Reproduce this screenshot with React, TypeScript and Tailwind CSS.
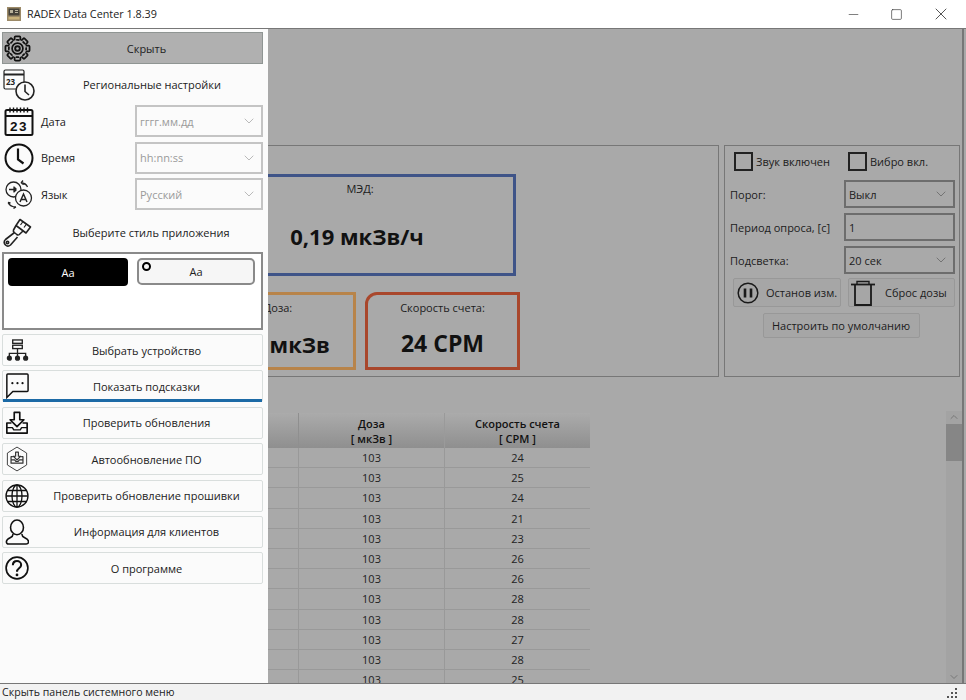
import { ChevronDown, Minus, Square, X } from "lucide-react";
import type { ReactNode } from "react";

const rows = ["24", "25", "24", "21", "23", "26", "26", "28", "28", "27", "28", "25"];

function GearIcon() {
  const teeth = [0, 45, 90, 135, 180, 225, 270, 315];
  return (
    <svg width="27" height="27" viewBox="0 0 28 28" fill="none" stroke="#111" strokeWidth="1.8">
      {teeth.map((a) => (
        <rect key={a} x="11" y="1.5" width="6" height="5" rx="1" transform={`rotate(${a} 14 14)`} fill="#b0b0b0" />
      ))}
      <circle cx="14" cy="14" r="9" fill="#b0b0b0" stroke="none" />
      <circle cx="14" cy="14" r="9" strokeDasharray="3.5 3.570" strokeDashoffset="1.700" />
      <circle cx="14" cy="14" r="5.6" />
      <circle cx="14" cy="14" r="2.4" strokeWidth="2" />
    </svg>
  );
}

function CalendarClockIcon() {
  return (
    <svg width="32" height="32" viewBox="0 0 32 32" fill="none" stroke="#222" strokeWidth="1.2">
      <rect x="1" y="1" width="20" height="19" rx="1.5" />
      <path d="M1 5.5h20" strokeWidth="2" />
      <text x="3" y="15.5" fontSize="8" fontWeight="700" fill="#222" stroke="none" fontFamily="Open Sans, sans-serif">23</text>
      <circle cx="22" cy="22" r="9" fill="#fbfbfb" strokeWidth="1.6" />
      <path d="M22 15.5V22.5L26 26" strokeWidth="1.6" />
    </svg>
  );
}

function DateIcon() {
  return (
    <svg width="30" height="30" viewBox="0 0 30 30" fill="none" stroke="#111">
      <rect x="1.5" y="4" width="27" height="25" rx="1.5" strokeWidth="2" />
      <path d="M1.5 10h27" strokeWidth="2" />
      <path d="M6 1.5v5M9.5 1.5v5M13 1.5v5M16.5 1.5v5M20 1.5v5M23.5 1.5v5" strokeWidth="1.4" />
      <text x="15" y="25" textAnchor="middle" fontSize="13.5" fontWeight="700" letterSpacing="1.5" fill="#111" stroke="none" fontFamily="Liberation Sans, sans-serif">23</text>
    </svg>
  );
}

function ClockIcon() {
  return (
    <svg width="30" height="30" viewBox="0 0 30 30" fill="none" stroke="#111" strokeWidth="2">
      <circle cx="15" cy="15" r="13.5" />
      <path d="M14 5.5V16.5L19.5 20.5" strokeWidth="2.2" />
    </svg>
  );
}

function LanguageIcon() {
  return (
    <svg width="32" height="32" viewBox="0 0 32 32" fill="none" stroke="#222" strokeWidth="1.3">
      <circle cx="10.5" cy="11.5" r="7.5" />
      <circle cx="20.5" cy="20" r="8" fill="#fbfbfb" />
      <path d="M6 11.5h7M11 8.5v6M13.5 11.5l-2-2M13.5 11.5l-2 2" />
      <path d="M17 24l3.5-8 3.5 8M18.2 21.5h4.6" strokeWidth="1.5" />
      <path d="M18 5c3 0 5.5 1.5 6.5 4M18 5l2-2.5M18 5l2.5 1.5" />
      <path d="M13 29c-4 0-6.500-1.500-8-4.500M13 29l-2.500 1.500M5 24.500l2.500 .500" />
    </svg>
  );
}

function BrushIcon() {
  return (
    <svg width="32" height="32" viewBox="0 0 32 32" fill="none" stroke="#222" strokeWidth="1.6" strokeLinejoin="round">
      <path d="M18 3.500L28.500 11 24 17 14 9.500z" />
      <path d="M21 5.500l-2.500 3.500M24.500 8l-2.500 3.500" strokeWidth="1.2" />
      <path d="M14 9.500L11.500 14c-.5 1 0 1.800.8 2.500l2.500 2c.8.600 1.700.700 2.500 0L21 15" />
      <path d="M12.500 16.500L3.500 23.500c-2 1.800-1.500 4 0 5.500s3.500 1.300 5 0l7-8" />
      <circle cx="5.500" cy="26.500" r="1.200" />
    </svg>
  );
}

function NetworkIcon() {
  return (
    <svg width="23" height="23" viewBox="0 0 24 24" fill="none" stroke="#222" strokeWidth="1.4">
      <rect x="7" y="1" width="10" height="3.500" />
      <rect x="7" y="6.500" width="10" height="3.500" />
      <path d="M12 10v5M3.500 18v-3h17v3M12 15v3" />
      <circle cx="3.500" cy="20" r="2" fill="#222" />
      <circle cx="12" cy="20" r="2" fill="#222" />
      <circle cx="20.500" cy="20" r="2" fill="#222" />
    </svg>
  );
}

function ChatIcon() {
  return (
    <svg width="24" height="28" viewBox="0 0 26 28" fill="none" stroke="#111" strokeWidth="1.6">
      <path d="M3 1h21c.6 0 1 .4 1 1v17c0 .6-.4 1-1 1H8.500L2 26.500V2c0-.6.4-1 1-1z" />
      <circle cx="8" cy="11" r="1.200" fill="#111" stroke="none" />
      <circle cx="13.500" cy="11" r="1.200" fill="#111" stroke="none" />
      <circle cx="19" cy="11" r="1.200" fill="#111" stroke="none" />
    </svg>
  );
}

function InboxIcon() {
  return (
    <svg width="24" height="24" viewBox="0 0 26 26" fill="none" stroke="#111" strokeWidth="1.8" strokeLinejoin="round">
      <path d="M10 1.500h6v8h4.500L13 17 5.500 9.500H10z" />
      <path d="M7 13H2v11h22V13h-5" />
      <path d="M2 18h6l1.500 2.500h7L18 18h6" strokeWidth="1.5" />
    </svg>
  );
}

function HexIcon() {
  return (
    <svg width="22" height="26" viewBox="0 0 24 28" fill="none" stroke="#333" strokeWidth="1">
      <path d="M12 1l10.500 6.500v13L12 27 1.500 20.500v-13z" />
      <g strokeWidth="1.300" strokeLinejoin="round">
        <path d="M10.500 6.500h3v4.500h2.500L12 15l-4-4h2.500z" />
        <path d="M7.500 11.500H5.500v7h13v-7h-2" />
        <path d="M5.500 15h4l1 1.500h3l1-1.500h4" />
      </g>
    </svg>
  );
}

function GlobeIcon() {
  return (
    <svg width="24" height="24" viewBox="0 0 24 24" fill="none" stroke="#111" strokeWidth="1.300">
      <circle cx="12" cy="12" r="11" />
      <ellipse cx="12" cy="12" rx="5" ry="11" />
      <path d="M12 1v22M1 12h22M2.500 6.500h19M2.500 17.500h19" />
    </svg>
  );
}

function UserIcon() {
  return (
    <svg width="24" height="26" viewBox="0 0 26 28" fill="none" stroke="#111" strokeWidth="1.7">
      <ellipse cx="13" cy="9" rx="7" ry="8" />
      <path d="M8.500 16c.500 2-.500 3-2.500 4-2.500 1.200-4.500 2-4.500 4.500 0 1.500 1 2.500 2.500 2.500h19c1.500 0 2.500-1 2.500-2.500 0-2.500-2-3.300-4.500-4.500-2-1-3-2-2.500-4" />
    </svg>
  );
}

function HelpIcon() {
  return (
    <svg width="24" height="24" viewBox="0 0 26 26" fill="none" stroke="#111" strokeWidth="1.8">
      <circle cx="13" cy="13" r="11.800" />
      <path d="M8.500 10c0-2.800 2-4.500 4.500-4.500s4.500 1.700 4.500 4.200c0 3.800-4.500 3.500-4.500 7.300" strokeWidth="2.200" />
      <circle cx="13" cy="20.500" r="1.500" fill="#111" stroke="none" />
    </svg>
  );
}

function PauseIcon() {
  return (
    <svg width="22" height="22" viewBox="0 0 22 22" fill="none" stroke="#1a1a1a" strokeWidth="1.500">
      <circle cx="11" cy="11" r="9.800" />
      <path d="M8 6.500v9M14 6.500v9" strokeWidth="2.600" />
    </svg>
  );
}

function TrashIcon() {
  return (
    <svg width="24" height="26" viewBox="0 0 24 26" fill="none" stroke="#1a1a1a" strokeWidth="1.800">
      <path d="M0 4.500h24" />
      <path d="M6 4.500V1.500h12v3" strokeWidth="1.400" />
      <path d="M4 5v20h16V5" />
    </svg>
  );
}

function AppLogo() {
  return (
    <svg width="14" height="14" viewBox="0 0 14 14">
      <rect width="14" height="14" fill="#9c8a68" />
      <rect x="1.500" y="1.500" width="11" height="7" fill="#45423a" />
      <path d="M3 3h3v3H3zM8 3h3v1H8zM8 5h3v1H8z" fill="#b9b29c" />
      <rect x="1.500" y="10" width="11" height="2.500" fill="#c9b27a" />
    </svg>
  );
}

function SideButton({ icon, label, active }: { icon: ReactNode; label: string; active?: boolean }) {
  return (
    <div className="relative flex h-[32px] items-center rounded-[2px] border border-[#d9dedd] bg-[#fbfbfb]">
      <span className="flex w-[28px] shrink-0 items-center justify-center">{icon}</span>
      <span className="flex-1 text-center text-[#222]">{label}</span>
      {active && <div className="absolute inset-x-0 -bottom-px h-[3px] bg-[#1c6aa6]" />}
    </div>
  );
}

function SideCombo({ icon, label, value }: { icon: ReactNode; label: string; value: string }) {
  return (
    <div className="flex h-[32px] items-center">
      <span className="flex w-[34px] shrink-0 justify-center">{icon}</span>
      <span className="ml-[5px] w-[94px] text-[#222]">{label}</span>
      <div className="flex h-[32px] flex-1 items-center justify-between border-2 border-[#c4c4c4] pl-[3px] pr-[4px] text-[#9a9a9a]">
        {value}
        <ChevronDown size={16} strokeWidth={1} className="text-[#999]" />
      </div>
    </div>
  );
}

function PanelCombo({ value }: { value: string }) {
  return (
    <div className="flex h-[28px] w-[111px] items-center justify-between border-2 border-[#6d6d6d] pl-[3px] pr-[4px]">
      {value}
      <ChevronDown size={16} strokeWidth={1.2} className="text-[#666]" />
    </div>
  );
}

function Checkbox({ label }: { label: string }) {
  return (
    <div className="flex items-center gap-[3px] whitespace-nowrap">
      <div className="size-[19px] border-2 border-[#222]" />
      {label}
    </div>
  );
}

function Drawer() {
  return (
    <div className="absolute inset-y-0 left-0 flex w-[268px] flex-col bg-[#fbfbfb] pl-[2px] pr-[5px] pt-[3px]">
      <div className="flex h-[32px] items-center border border-[#8f9593] bg-[#b0b0b0]">
        <span className="flex w-[28px] shrink-0 justify-center"><GearIcon /></span>
        <span className="flex-1 text-center text-[#222]">Скрыть</span>
      </div>
      <div className="mt-[3px] flex h-[35px] items-center">
        <span className="flex w-[34px] shrink-0 justify-center"><CalendarClockIcon /></span>
        <span className="flex-1 pl-[5px] text-center text-[#222]">Региональные настройки</span>
      </div>
      <div className="mt-[3px] flex flex-col gap-[4.5px]">
        <SideCombo icon={<DateIcon />} label="Дата" value="гггг.мм.дд" />
        <SideCombo icon={<ClockIcon />} label="Время" value="hh:nn:ss" />
        <SideCombo icon={<LanguageIcon />} label="Язык" value="Русский" />
      </div>
      <div className="mt-[4px] flex h-[36px] items-center">
        <span className="flex w-[32px] shrink-0 justify-center"><BrushIcon /></span>
        <span className="flex-1 pl-[5px] text-center text-[#222]">Выберите стиль приложения</span>
      </div>
      <div className="mt-[2px] flex h-[78px] items-start gap-[9px] border-2 border-[#8a8a8a] bg-white pl-[4px] pt-[4px]">
        <div className="flex h-[28px] w-[120px] items-center justify-center rounded-[4px] bg-black text-white">Aa</div>
        <div className="relative flex h-[27px] w-[118px] items-center justify-center rounded-[5px] border-2 border-[#8a8a8a] bg-[#f6f6f6] text-[#222]">
          Aa
          <div className="absolute left-[3px] top-[2px] size-[9px] rounded-full border-2 border-black" />
        </div>
      </div>
      <div className="mt-[4px] flex flex-col gap-[4.400px]">
        <SideButton icon={<NetworkIcon />} label="Выбрать устройство" />
        <SideButton icon={<ChatIcon />} label="Показать подсказки" active />
        <SideButton icon={<InboxIcon />} label="Проверить обновления" />
        <SideButton icon={<HexIcon />} label="Автообновление ПО" />
        <SideButton icon={<GlobeIcon />} label="Проверить обновление прошивки" />
        <SideButton icon={<UserIcon />} label="Информация для клиентов" />
        <SideButton icon={<HelpIcon />} label="О программе" />
      </div>
    </div>
  );
}

export default function App() {
  return (
    <div className="flex h-[700px] w-[966px] flex-col overflow-hidden bg-white text-[11px] leading-none text-[#1c1c1c] [font-family:'Open_Sans','Noto_Sans',sans-serif]">
      <div className="flex h-[28px] shrink-0 items-center bg-white pl-[7px]">
        <AppLogo />
        <span className="ml-[6px] text-[10.800px] text-[#222]">RADEX Data Center 1.8.39</span>
        <div className="ml-auto flex items-center text-[#333]">
          <Minus size={15} strokeWidth={1} className="mr-[29px]" />
          <Square size={13} strokeWidth={1.200} className="mr-[28px]" />
          <X size={20} strokeWidth={1} className="mr-[15px]" />
        </div>
      </div>

      <div className="relative flex min-h-0 flex-1 flex-col border-y border-[#777] bg-[#a9a9a9]">
        <div className="mr-[2px] flex min-h-0 flex-1 flex-col border-r-2 border-[#777]">
          <div className="mt-[116px] flex h-[232px] shrink-0 gap-[5px] pl-[6px] pr-[2px]">
            <div className="flex flex-1 flex-col items-center border border-[#777] pr-[5px] pt-[28px]">
              <div className="flex h-[102px] w-[312px] flex-col items-center border-[3px] border-[#3f5488] pt-[6px]">
                МЭД:
                <div className="mt-[31px] pr-[6px] text-[22px] font-bold text-[#111]">0,19 мкЗв/ч</div>
              </div>
              <div className="mt-[16px] flex gap-[9px]">
                <div className="flex h-[78px] w-[156px] flex-col items-center border-[3px] border-[#b8844a] pt-[7px]">
                  Доза:
                  <div className="mt-[20px] text-[22px] font-bold text-[#111]">103 мкЗв</div>
                </div>
                <div className="flex h-[78px] w-[155px] flex-col items-center rounded-tl-[12px] border-[3px] border-[#a9472c] pt-[7px]">
                  Скорость счета:
                  <div className="mt-[19px] text-[23px] font-bold text-[#111]">24 CPM</div>
                </div>
              </div>
            </div>

            <div className="flex w-[236px] shrink-0 flex-col border border-[#777] pl-[5px] pr-[4px] pt-[6px]">
              <div className="flex items-center pl-[4px]">
                <div className="w-[114px]"><Checkbox label="Звук включен" /></div>
                <Checkbox label="Вибро вкл." />
              </div>
              <div className="mt-[9px] flex flex-col gap-[5px]">
                <div className="flex items-center justify-between">Порог:<PanelCombo value="Выкл" /></div>
                <div className="flex items-center justify-between">Период опроса, [с]
                  <div className="flex h-[28px] w-[111px] items-center border-2 border-[#6d6d6d] pl-[3px]">1</div>
                </div>
                <div className="flex items-center justify-between">Подсветка:<PanelCombo value="20 сек" /></div>
              </div>
              <div className="mt-[4px] flex gap-[7px] pl-[3px]">
                <div className="flex h-[29px] w-[108px] items-center gap-[7px] whitespace-nowrap rounded-[2px] border border-[#989898] bg-[#a6a6a6] pl-[3px]">
                  <PauseIcon />Останов изм.
                </div>
                <div className="flex h-[29px] w-[107px] items-center gap-[6px] whitespace-nowrap rounded-[2px] border border-[#989898] bg-[#a6a6a6] pl-[2px]">
                  <TrashIcon /><span className="pl-[4px]">Сброс дозы</span>
                </div>
              </div>
              <div className="mr-[3px] mt-[6px] flex h-[25px] w-[157px] items-center justify-center self-center rounded-[2px] border border-[#989898] bg-[#a6a6a6]">
                Настроить по умолчанию
              </div>
            </div>
          </div>

          <div className="mt-[36px] flex min-h-0 flex-1 justify-between pl-[9px]">
            <div className="w-[581px] shrink-0 overflow-hidden">
              <div className="flex h-[35px] bg-gradient-to-b from-[#ababab] to-[#8f8f8f] font-semibold text-[#111]">
                <div className="w-[290px] border-r border-[#8f8f8f]" />
                <div className="flex w-[146px] flex-col items-center justify-center gap-[4px] border-r border-[#9a9a9a]"><span>Доза</span><span>[ мкЗв ]</span></div>
                <div className="flex w-[145px] flex-col items-center justify-center gap-[4px]"><span>Скорость счета</span><span>[ CPM ]</span></div>
              </div>
              {rows.map((v, i) => (
                <div key={i} className="flex h-[20.200px] items-center border-b border-[#999] text-[#222]">
                  <div className="h-full w-[290px] border-r border-[#999]" />
                  <div className="flex h-full w-[146px] items-center justify-center border-r border-[#999]">103</div>
                  <div className="flex h-full w-[145px] items-center justify-center">{v}</div>
                </div>
              ))}
            </div>
            <div className="relative mt-[-2px] w-[16px] shrink-0 bg-[#a3a3a3]">
              <ChevronDown size={12} className="absolute left-[2px] top-0 rotate-180 text-[#777]" />
              <div className="absolute inset-x-0 top-[13px] h-[37px] bg-[#868686]" />
              <ChevronDown size={12} className="absolute bottom-0 left-[2px] text-[#777]" />
            </div>
          </div>
        </div>
        <Drawer />
      </div>

      <div className="relative flex h-[16px] shrink-0 items-center bg-[#f2f2f2] pl-[2px] pt-[1px] text-[10.600px] text-[#222]">
        Скрыть панель системного меню
        <div className="absolute bottom-[2px] right-[9px] grid grid-cols-3 gap-[2px]">
          <span /><span /><span className="size-[2px] bg-[#555]" />
          <span /><span className="size-[2px] bg-[#555]" /><span className="size-[2px] bg-[#555]" />
          <span className="size-[2px] bg-[#555]" /><span className="size-[2px] bg-[#555]" /><span className="size-[2px] bg-[#555]" />
        </div>
      </div>
    </div>
  );
}
